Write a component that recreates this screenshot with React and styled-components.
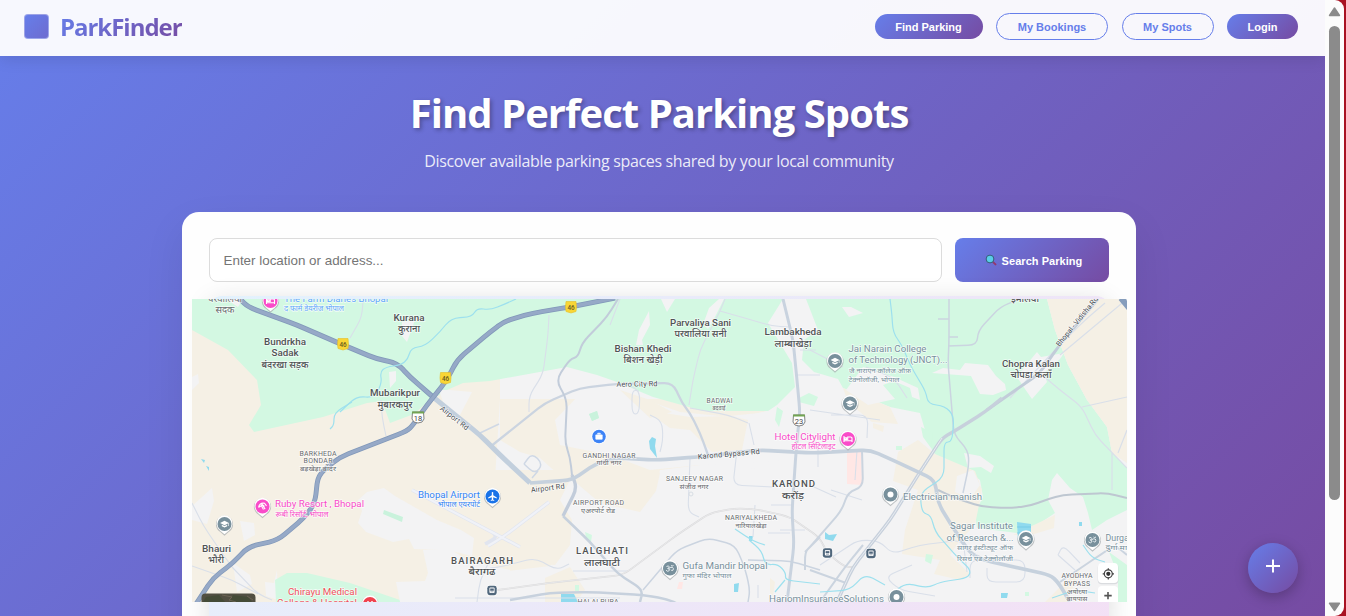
import React from "react";
import styled, { createGlobalStyle, css } from "styled-components";

const gradient = "linear-gradient(135deg, #667eea 0%, #764ba2 100%)";

const GlobalStyle = createGlobalStyle`
  * { box-sizing: border-box; }
  body { margin: 0; overflow: hidden; background: #a81222; }
`;

const Window = styled.div`
  display: flex;
  width: 1344px;
  height: 616px;
  overflow: hidden;
  border-radius: 0 9px 9px 0;
  background: #fcfcfc;
`;

const Page = styled.div`
  display: flex;
  flex-direction: column;
  width: 1325px;
  height: 616px;
  overflow: hidden;
  position: relative;
  background: ${gradient};
  font-family: "Open Sans", "Noto Sans", sans-serif;
`;

const Header = styled.header`
  display: flex;
  flex: none;
  align-items: center;
  justify-content: space-between;
  height: 56px;
  padding: 0 27px 3px 24px;
  background: rgba(255, 255, 255, 0.95);
  box-shadow: 0 2px 16px rgba(0, 0, 0, 0.12);
`;

const Brand = styled.div`
  display: flex;
  align-items: center;
  gap: 11px;
`;

const BrandMark = styled.span`
  width: 25px;
  height: 25px;
  border-radius: 4px;
  border: 1px solid rgba(190, 196, 240, 0.6);
  background: linear-gradient(135deg, #667eea, #6d6cd0);
`;

const BrandName = styled.span`
  font-size: 24px;
  line-height: 34px;
  font-weight: 700;
  letter-spacing: -1.03px;
  color: transparent;
  background: ${gradient};
  background-clip: text;
`;

const Nav = styled.nav`
  display: flex;
  align-items: center;
  gap: 13.5px;
`;

const NavButton = styled.button`
  width: ${(p) => p.$width}px;
  height: 25px;
  padding: 0;
  border: 0;
  border-radius: 14px;
  color: #fff;
  background: ${gradient};
  font: 700 11px "Liberation Sans", Arial, sans-serif;
  ${(p) =>
    p.$outline &&
    css`
      height: 27px;
      border: 1.4px solid #667eea;
      color: #667eea;
      background: transparent;
    `}
`;

const Hero = styled.section`
  display: flex;
  flex-direction: column;
  align-items: center;
  flex: none;
  height: 156px;
  padding: 29px 7px 0 0;
  color: #fff;
`;

const Title = styled.h1`
  margin: 0;
  font-size: 40px;
  line-height: 56px;
  font-weight: 700;
  letter-spacing: -0.96px;
  white-space: nowrap;
  text-shadow: 2px 2px 4px rgba(0, 0, 0, 0.3);
`;

const Subtitle = styled.p`
  margin: 9px 0 0;
  font-size: 16px;
  line-height: 22px;
  letter-spacing: -0.345px;
  white-space: nowrap;
  color: rgba(255, 255, 255, 0.88);
`;

const Card = styled.main`
  display: flex;
  flex-direction: column;
  flex: none;
  width: 954px;
  height: 460px;
  margin-left: 182px;
  padding: 26px 27px 0;
  border-radius: 17px;
  background: #fefefe;
  box-shadow: 0 16px 40px rgba(0, 0, 0, 0.08);
`;

const SearchRow = styled.div`
  display: flex;
  gap: 13px;
  height: 44px;
`;

const SearchInput = styled.input`
  flex: 1;
  min-width: 0;
  padding: 0 13.5px;
  border: 1px solid #dcdcdc;
  border-radius: 8px;
  outline: 0;
  background: #fff;
  font: 13.4px "Liberation Sans", Arial, sans-serif;
  &::placeholder { color: #757575; }
`;

const SearchButton = styled.button`
  display: flex;
  align-items: center;
  justify-content: center;
  gap: 5px;
  width: 154px;
  padding: 2px 0 0 3px;
  border: 0;
  border-radius: 8px;
  color: #fff;
  background: ${gradient};
  font: 700 11px "Liberation Sans", Arial, sans-serif;
  letter-spacing: 0.05px;
  svg { margin-top: -2px; }
`;

const MapPanel = styled.div`
  display: flex;
  justify-content: center;
  align-items: flex-start;
  height: 340px;
  margin-top: 14px;
  padding-top: 3px;
  border-radius: 12px;
  background: linear-gradient(135deg, #e3f2fd 0%, #f3e0f5 100%);
  box-shadow: 0 5px 26px rgba(0, 0, 0, 0.13);
`;

const MapView = styled.svg`
  display: block;
  flex: none;
  width: 935px;
  height: 303px;
  margin-left: 1px;
`;

const AddButton = styled.button`
  display: grid;
  place-items: center;
  position: absolute;
  right: 27px;
  bottom: 23px;
  width: 50px;
  height: 50px;
  padding: 0 0 4px;
  border: 0;
  border-radius: 50%;
  background: ${gradient};
  box-shadow: 0 4px 14px rgba(0, 0, 0, 0.25);
`;

const Scrollbar = styled.div`
  display: flex;
  flex-direction: column;
  align-items: center;
  justify-content: space-between;
  width: 19px;
  padding: 7px 0 4px;
`;

const Thumb = styled.div`
  width: 11px;
  height: 474px;
  margin: 0 0 94px;
  border-radius: 6px;
  background: #8b8b8b;
`;

const GREEN = "#d3f8e2";
const SAND = "#f5f0e5";
const URBAN = "#f3f3f4";
const WATER = "#90daee";
const GREY = "#78909c";
const PINK = "#f94cc9";

const areas = [
  [SAND, "M192 299H500V440L520 452 540 458 560 476 590 472 610 470 640 500 655 490 660 470 700 465 690 420 770 412 765 399H500L490 560 560 540 570 560 550 602H192Z"],
  [URBAN, "M480 602 500 572 550 566 575 525 570 500 610 512 640 510 660 490 690 475 790 465V602Z"],
  [SAND, "M545 578 570 567 585 590 576 602H545Z"],
  [SAND, "M490 470 575 470 560 500 572 520 570 545 555 565 490 560Z"],
  [URBAN, "M555 420 580 394 615 388 640 398 680 412 740 418 770 410 790 418 790 460 700 465 650 470 610 455 560 445Z"],
  [SAND, "M645 410 690 417 732 416 748 420 742 450 712 452 690 430 670 428ZM620 390 650 400 672 412 650 418Z"],
  [SAND, "M567 474 597 460 630 466 660 473 656 491 640 512 600 503 580 486Z"],
  [GREEN, "M192 299H783L768 323 792 363 795 387 777 405 768 411 703 411 653 397 617 382 597 375 567 367 490 381 463 383 447 390 424 405 414 414 390 423 382 401 367 403 323 417 254 432 249 425 261 405 257 380 228 350 192 330Z"],
  [GREEN, "M806 299H1047L1055 330 1068 365 1087 400 1093 408 1107 427 1112 453 1127 468V510L1107 520 1092 530 1088 513 1083 497 1070 488 1057 473 1052 480 1048 500 1055 513 1040 523 1017 533 977 528 975 513 983 497 980 480 963 467 937 457 932 450 927 437 920 413 890 407 864 396 843 388 838 379 814 372 802 360 804 340 818 330Z"],
  [SAND, "M1047 299H1127V463L1112 453 1107 427 1093 408 1087 400 1068 365 1055 330Z"],
  [SAND, "M843 388 890 407 898 424 872 422 848 402ZM898 452 918 440 935 454 975 471 982 490 975 525 960 540 950 555 970 574 960 580 934 574 940 560 902 554 905 530 918 490 893 481Z"],
  [SAND, "M1013 535 1055 515 1054 528 1031 535ZM1120 535 1080 570 1067 602H1045L1065 582ZM873 423 884 426 883 432 873 428ZM770 578 775 582 773 596 770 593Z"],
  [URBAN, "M192 506 212 488 214 501 207 524 192 520ZM240 521 254 523 255 535 244 541ZM233 563 250 575 252 584 237 592ZM278 600 266 596 265 582 274 583 277 570Z"],
  [GREEN, "M275 580 287 573 307 573 350 583 400 600 400 602H276Z"],
  [URBAN, "M358 500 367 492 384 488 395 496 437 520 461 530 474 538 472 556 448 550 414 549 409 539 393 542 366 532 358 523 362 511ZM396 582 425 581 428 573 423 550 450 549 467 560 510 570V602H400Z"],
  [URBAN, "M439 390 450 390 472 392 460 415 447 414ZM192 377 198 374 199 383 192 390ZM389 372 396 371 396 381 390 388ZM402 322 415 320 407 342 402 336ZM226 299 243 299 238 307Z"],
  [URBAN, "M639 330 649 311 650 325 642 340 643 345 636 345ZM661 299H675L667 312ZM709 308 719 299H724L716 315 708 329 703 324 705 319ZM842 307 851 307 863 313 849 317Z"],
  [URBAN, "M863 367 885 374 894 377 918 388 920 400 912 397 910 388 894 381 883 385 895 399 868 405 846 390ZM932 373 943 368 960 370 965 363 988 365 996 376 1005 384 1006 390 993 395 980 394 971 376Z"],
  [URBAN, "M1022 370 1037 352 1041 357 1064 353 1060 359 1044 373 1047 382 1032 399 1025 389 1017 377ZM964 453 980 456 994 466 991 473 981 467 968 468ZM957 476 973 470 980 485 970 499 955 492Z"],
  [GREEN, "M777 407 783 411 779 427 775 420ZM799 398 809 393 818 397 814 406 799 402ZM589 414 597 411 599 418 592 421ZM921 427 933 433 931 448 923 437Z"],
  [GREEN, "M585 532 592 535 591 542 586 537ZM896 446 902 446 902 450 896 450ZM926 554 933 555 931 564 925 561ZM1109 552 1127 565V602H1118V575ZM1025 592 1029 592 1029 596 1025 596ZM575 585 579 585 579 591 575 591Z"],
  ["#c9f2dc", "M384 510 403 517 402 522 383 514ZM589 414 597 411 599 418 592 421Z"],
  ["#ffe7e5", "M847 453 861 451 862 485 847 484ZM679 582 683 582 682 589 677 589Z"],
  [WATER, "M561 594H574L578 602H561ZM1017 522 1031 524 1031 541H1018ZM825 532 829 535 837 534 833 541 825 539ZM649 441 652 437 656 439 655 446 657 458 650 449ZM1001 593 1008 593 1007 598 1001 598ZM749 536 753 536 752 541 749 541ZM734 584 739 583 738 592 734 592ZM1079 522 1082 522 1082 526 1079 526ZM201 459 205 460 204 463ZM206 466 209 467 209 471Z"],
];

const roads = [
  // Side streets
  ["#d9dfe9", 1.1, "M363 299 362 317 350 338M381 400 382 417 386 436M192 503 203 525 215 543 232 567M192 566 232 580 258 594M232 567 258 594 272 600M549 315 548 335 543 374 529 396V412M620 299 610 325M631 386 640 392 639 414 632 414 632 390 639 391M650 415 662 421 663 440 660 452M690 408 728 415 748 423M749 423 754 445M720 311 700 350 693 380 689 405M725 299 720 311"],
  ["#d9dfe9", 1.1, "M690 459 689 485 688 512 699 517M737 450 733 485 773 487M771 505H792M768 533H790M795 375H820M800 350H816M831 415H868L867 438M831 490 862 500M857 450 855 480M814 487 836 497M820 565 858 540 880 541 892 554 920 545 963 540 967 572M1000 560H970V578M990 560H1025V582H987V568M912 565 885 577 900 590 935 596M1058 555 1075 570M1058 555 1063 545 1080 563M490 568 500 567 535 558 557 570 569 564M573 571H628M477 602 480 580 490 560M455 598 620 598M780 530H805M810 410 880 420M818 445V467M755 505 753 537M758 598V585"],
  ["#d9dfe9", 1.2, "M720 311 755 321 772 326 789 327M866 367 894 378 907 398M810 350 843 367M1105 303 1085 320 1058 347 1040 366 1010 398M1127 299 1060 355M1040 373 1060 390 1082 407 1095 435 1127 468M1082 407 1127 397M1118 453 1127 430M1112 453V490"],
  ["#e1e5ef", 3.5, "M412 490 499 536 485 544M488 546 503 537 549 502M490 531 520 547"],
  ["#f0f2f8", 2.2, "M412 490 499 536M488 546 503 537 549 502M490 531 520 547"],
  ["#cfd8e5", 1.5, "M524 464 532 453 543 464 535 474 524 464M532 478 538 471M480 433 499 424"],
  // Railway
  ["#d9d9db", 1.8, "M490 591 557 582 623 575 677 535 710 513 737 508 760 510 790 517 820 538 827 553 845 567 853 567"],
  ["#f3f3f4", 0.6, "M490 591 557 582 623 575 677 535 710 513 737 508 760 510 790 517 820 538 827 553 845 567 853 567"],
  // Secondary roads
  ["#cbd4e0", 1.5, "M949 299V343L948 363 954 435 968 450 969 465 963 493M948 346 977 345 978 331 1000 307 1020 299M938 319H949M949 337H958M643 590 677 550 708 538 735 545 745 568 750 590 748 602M748 560 790 561 820 570"],
  ["#cbd4e0", 2.3, "M490 447 545 403 580 388 617 384 673 383 682 403 690 413 700 433 708 455"],
  ["#c2ccda", 2, "M618 299 607 317 582 343 578 357 570 359 556 380 567 400 565 443 570 457 572 475"],
  ["#c2ccda", 3.4, "M572 475 577 488 563 516"],
  ["#c7d1dd", 2.5, "M563 516 590 542 617 573 643 590 640 602M510 600 550 593 590 592 643 595 667 599 680 605"],
  ["#c9d3df", 3, "M783 299 793 340 797 380 800 413 798 430 796 452 792 512 794 545 787 602"],
  ["#cbd4df", 2, "M862 450 863 487 848 492 842 510 810 547 805 552V570M810 570 846 583M820 537 805 552M1060 582 1100 555 1115 545 1127 555M820 602 845 567 863 545"],
  ["#bec7d1", 2, "M938 490 955 498 983 507 1010 508 1030 506 1048 499 1063 495 1107 493 1127 498"],
  ["#c2ccd9", 3, "M1098 299 1058 347 1040 373 987 410"],
  ["#c7d0dc", 3.4, "M1002 398 985 412 953 432 942 438 920 472 890 520 853 567 837 602"],
  ["#ffffff", 0.6, "M942 438 920 472 890 520 853 567 837 602"],
  ["#c6d1dd", 3.7, "M530 483 572 480 597 463 617 458 657 460 697 457 760 450 810 453 870 450 897 462 935 480 938 503 950 523 970 553 983 560 1050 575 1058 582 1070 602"],
  ["#c2cfdd", 5, "M433 397 480 435 500 455 530 483"],
  // Highways
  ["#8198b9", 5.1, "M240 299 248 307 297 325 343 345 377 359 397 363 410 377 433 397"],
  ["#96a9c7", 3.6, "M240 299 248 307 297 325 343 345 377 359 397 363 410 377 433 397"],
  ["#8198b9", 4.9, "M615 298 570 307 533 313 505 321 490 332 457 360 447 380 427 405 413 425 407 431 340 457 318 475 315 503 305 517 278 540 248 547 233 563 213 578 196 604"],
  ["#96a9c7", 3.4, "M615 298 570 307 533 313 505 321 490 332 457 360 447 380 427 405 413 425 407 431 340 457 318 475 315 503 305 517 278 540 248 547 233 563 213 578 196 604"],
  ["#869dbc", 6, "M1121 298 1130 309"],
  // Streams
  ["#9de0ee", 1.2, "M340 412 357 396 374 398 382 383 380 372 386 367 401 365 408 359 411 348 425 346 440 332 451 318 472 317 477 308 490 310 505 304 516 299"],
  ["#9de0ee", 1.2, "M352 402 334 413 334 425 330 429M890 299 892 315 893 333 902 345 910 365 926 392 928 404 945 406 954 416 952 442 944 442 944 477 920 493 922 513 931 515 935 532 960 560 971 570 968 578 940 582 928 588 905 583 890 596M735 529 753 541 765 545M749 540 762 551 765 565 778 564 786 573 785 580 820 584M785 580 775 592M820 592 850 590 865 574 885 585M1083 545 1092 558 1105 562M1052 598 1075 590 1095 593"],
];

// Turns the straight runs of a road into a line whose bends are rounded.
function roundBends(d, radius = 9) {
  const lines = [];
  let mode = "M";
  let pts = [];
  const tokens = d.match(/[MLHV]|-?[\d.]+/g);
  for (let i = 0; i < tokens.length; i++) {
    const t = tokens[i];
    if (/[MLHV]/.test(t)) {
      mode = t;
      if (t === "M") {
        pts = [];
        lines.push(pts);
      }
      continue;
    }
    const last = pts[pts.length - 1];
    if (mode === "H") pts.push([+t, last[1]]);
    else if (mode === "V") pts.push([last[0], +t]);
    else pts.push([+t, +tokens[++i]]);
  }
  const toward = (a, b) => {
    const len = Math.hypot(b[0] - a[0], b[1] - a[1]) || 1;
    const k = Math.min(radius, len / 2) / len;
    return [a[0] + (b[0] - a[0]) * k, a[1] + (b[1] - a[1]) * k];
  };
  return lines
    .map((p) =>
      p.map((q, i) => {
        if (i === 0) return `M${q}`;
        if (i === p.length - 1) return `L${q}`;
        return `L${toward(q, p[i - 1])}Q${q} ${toward(q, p[i + 1])}`;
      }).join("")
    )
    .join("");
}

const places = [
  { x: 225, y: 302, w: 34, t: "परवालिया", s: 10 },
  { x: 225, y: 313, w: 19, t: "सदक", s: 10 },
  { x: 409, y: 321, w: 31, t: "Kurana" },
  { x: 409, y: 332, w: 22, t: "कुराना" },
  { x: 285, y: 344.5, w: 42, t: "Bundrkha" },
  { x: 285, y: 356, w: 27, t: "Sadak" },
  { x: 285, y: 367.5, w: 47, t: "बंदरखा सड़क" },
  { x: 395, y: 396, w: 50, t: "Mubarikpur" },
  { x: 395, y: 408, w: 35, t: "मुबारकपुर" },
  { x: 700.5, y: 326, w: 61, t: "Parvaliya Sani" },
  { x: 700.5, y: 337, w: 52, t: "परवालिया सनी" },
  { x: 643, y: 351.5, w: 57, t: "Bishan Khedi" },
  { x: 643, y: 363, w: 39, t: "बिशन खेड़ी" },
  { x: 793, y: 335, w: 57, t: "Lambakheda" },
  { x: 793, y: 346.5, w: 37, t: "लाम्बाखेड़ा" },
  { x: 1031, y: 367, w: 58, t: "Chopra Kalan" },
  { x: 1031, y: 378, w: 41, t: "चोपडा कलाँ" },
  { x: 1025, y: 301.5, w: 28, t: "इमलिया" },
  { x: 216.5, y: 552, w: 29, t: "Bhauri" },
  { x: 216, y: 563, w: 16, t: "भौरी" },
  { x: 318, y: 456, w: 37, t: "BARKHEDA", s: 7 },
  { x: 318, y: 463, w: 29, t: "BONDAR", s: 7 },
  { x: 318, y: 471, w: 36, t: "बड़खेड़ा बोंदर", s: 7 },
  { x: 482, y: 563.5, w: 62, t: "BAIRAGARH" },
  { x: 482, y: 575, w: 27, t: "बैरागढ" },
  { x: 602, y: 554, w: 52, t: "LALGHATI" },
  { x: 602, y: 565.5, w: 36, t: "लालघाटी" },
  { x: 793.5, y: 487, w: 43, t: "KAROND" },
  { x: 793, y: 498.5, w: 22, t: "करोंड़" },
  { x: 719.5, y: 403, w: 26, t: "BADWAI", s: 6.7 },
  { x: 719, y: 410, w: 13, t: "बदवाई", s: 6 },
  { x: 609, y: 457.5, w: 53, t: "GANDHI NAGAR", s: 6.9 },
  { x: 609, y: 465, w: 25, t: "गांधी नगर", s: 6.5 },
  { x: 694.5, y: 481, w: 57, t: "SANJEEV NAGAR", s: 6.9 },
  { x: 694, y: 488.5, w: 29, t: "संजीव नगर", s: 6.5 },
  { x: 598.5, y: 505, w: 51, t: "AIRPORT ROAD", s: 6.9 },
  { x: 598, y: 513, w: 34, t: "एअरपोर्ट रोड", s: 6.5 },
  { x: 751, y: 520, w: 52, t: "NARIYALKHEDA", s: 6.9 },
  { x: 751, y: 527.5, w: 31, t: "नारियालखेड़ा", s: 6.5 },
  { x: 598, y: 604, w: 41, t: "HALALPURA", s: 7 },
  { x: 1077, y: 578, w: 31, t: "AYODHYA", s: 6.9 },
  { x: 1077, y: 586, w: 26, t: "BYPASS", s: 6.9 },
  { x: 1077, y: 593.5, w: 20, t: "अयोध्या", s: 6.5 },
  { x: 1077, y: 600.5, w: 21, t: "बायपास", s: 6.5 },
  { x: 336, y: 301.5, w: 104, t: "The Farm Diaries Bhopal", c: "#62a7fb" },
  { x: 314, y: 310.5, w: 60, t: "द फार्म डेयरीज भोपाल", c: "#62a7fb", s: 7.5 },
  { x: 319.5, y: 507, w: 89, t: "Ruby Resort , Bhopal", c: PINK },
  { x: 302, y: 517, w: 53, t: "रूबी रिसॉर्ट, भोपाल", c: PINK, s: 7.5 },
  { x: 449, y: 497.5, w: 62, t: "Bhopal Airport", c: "#3484f5" },
  { x: 459, y: 507, w: 42, t: "भोपाल एयरपोर्ट", c: "#3484f5", s: 7.5 },
  { x: 805, y: 439.5, w: 61, t: "Hotel Citylight", c: PINK },
  { x: 813.5, y: 449, w: 44, t: "होटल सिटिलाइट", c: PINK, s: 7.5 },
  { x: 322.5, y: 594.5, w: 69, t: "Chirayu Medical", c: "#f0515c" },
  { x: 317, y: 606, w: 80, t: "College & Hospital", c: "#f0515c" },
  { x: 887.5, y: 351.5, w: 78, t: "Jai Narain College", c: GREY },
  { x: 898, y: 363, w: 99, t: "of Technology (JNCT)...", c: GREY },
  { x: 880, y: 373, w: 62, t: "जै नाराएन कॉलेज ऑफ़", c: GREY, s: 7 },
  { x: 874, y: 382, w: 51, t: "टेक्नोलॉजी, भोपाल", c: GREY, s: 7 },
  { x: 942.5, y: 499.5, w: 79, t: "Electrician manish", c: GREY },
  { x: 981.5, y: 529, w: 63, t: "Sagar Institute", c: GREY },
  { x: 980, y: 541, w: 67, t: "of Research &...", c: GREY },
  { x: 985, y: 550, w: 56, t: "सागर इंस्टीट्यूट ऑफ", c: GREY, s: 7 },
  { x: 985, y: 560.5, w: 56, t: "रिसर्च एंड टेक्नोलॉजी", c: GREY, s: 7 },
  { x: 725, y: 569, w: 85, t: "Gufa Mandir bhopal", c: GREY },
  { x: 707, y: 578, w: 49, t: "गुफा मंदिर भोपाल", c: GREY, s: 7 },
  { x: 826.5, y: 601.5, w: 115, t: "HariomInsuranceSolutions", c: GREY },
  { x: 1132, y: 541, w: 53, t: "Durga Mandir", c: GREY },
  { x: 1120, y: 550, w: 29, t: "दुर्गा माता", c: GREY, s: 7 },
];

const streetNames = [
  { x: 637, y: 386.5, w: 41, r: -1, t: "Aero City Rd" },
  { x: 453, y: 420, w: 34, r: 38, t: "Airport Rd" },
  { x: 548, y: 490.5, w: 34, r: -7, t: "Airport Rd" },
  { x: 729, y: 456.5, w: 62, r: -5, t: "Karond Bypass Rd" },
  { x: 1079, y: 323, w: 62, r: -51, t: "Bhopal - Vidisha Rd" },
];

const pins = [
  [270.5, 301, PINK, "bed"], [262.5, 506.5, PINK, "fan"], [848, 439, PINK, "bed"],
  [835, 361, GREY, "cap"], [850, 403.5, GREY, "cap"], [224.5, 524, GREY, "cap"], [1026, 539, GREY, "cap"],
  [890.5, 494.5, GREY, "dot"], [896.5, 597, GREY, "dot"], [670, 568.5, GREY, "om"], [1092.5, 540, GREY, "om"],
  [492.5, 496.5, "#1a73e8", "plane"], [370, 604, "#f0414e", "h"],
];

function PinGlyph({ kind }) {
  if (kind === "bed")
    return <path d="M-4-3V3M-4 1.8H4V3M4 1.5V-.8Q4-2 2.7-2H-.3V1M-3-1.2H-1.5V.5H-3Z" stroke="#fff" strokeWidth="1.1" fill="none" />;
  if (kind === "fan")
    return <path d="M-4 1Q-3-4 2-3.3L4-.6M-3.3.4 0-1.5 2.6 2.6M-1-2.5 2 0M-1-.6 1 3" stroke="#fff" strokeWidth="1.1" fill="none" />;
  if (kind === "cap")
    return <g fill="#fff"><path d="M-4.4-1 0-3.3 4.4-1 0 1.2Z" /><path d="M-2.7.7 0 2.1 2.7.7V2.2L0 3.6-2.7 2.2ZM3.8-1H4.4V2H3.8Z" /></g>;
  if (kind === "om")
    return <path d="M-3.5-2Q-1-3.4-.8-1.6-.8-.2-2.4 0 0 0-.7 2-2 3.8-4 1.8M-1.2 0Q1-1.8 2.7-1 4 0 3 1.7 1.5 2.5.8 1.2M1-3Q2-1.9 3.5-3" stroke="#e6edf0" strokeWidth="1" fill="none" />;
  if (kind === "plane")
    return <path d="M-.7-4.2Q0-5 .7-4.2V-1.3L4.3 1V2L.7.8V3L1.8 3.9V4.5L0 4-1.8 4.5V3.9L-.7 3V.8L-4.3 2V1L-.7-1.3Z" fill="#fff" />;
  if (kind === "h")
    return <path d="M-2-3V3M2-3V3M-2 0H2" stroke="#fff" strokeWidth="1.4" />;
  return <circle r="3" fill="#fff" />;
}

function Pin({ x, y, color, kind }) {
  return (
    <g transform={`translate(${x} ${y})`}>
      <path d="M-8.5 1A8.6 8.6 0 1 1 8.5 1Q8 5 4.2 7.6L0 11.3-4.2 7.6Q-8 5-8.5 1Z" fill="#a4a9ad" opacity=".7" transform="translate(0 .4)" />
      <path d="M-7.9.5A8 8 0 1 1 7.9.5Q7.3 4.7 4 7L0 10.3-4 7Q-7.3 4.7-7.9.5Z" fill="#fff" />
      <circle r="7" fill={color} />
      <PinGlyph kind={kind} />
    </g>
  );
}

function HighwayShield({ x, y }) {
  return (
    <g>
      <path d={`M${x - 5} ${y - 5.5}H${x + 5}Q${x + 6} ${y} ${x + 5} ${y + 4.5}L${x} ${y + 6}L${x - 5} ${y + 4.5}Q${x - 6} ${y} ${x - 5} ${y - 5.5}Z`} fill="#f9d635" stroke="#e4bd28" strokeWidth=".6" />
      <text x={x} y={y + 3} fontSize="6.3" fontWeight="500" textAnchor="middle" fill="#665820">46</text>
    </g>
  );
}

function StateShield({ x, y, value }) {
  return (
    <g>
      <path d={`M${x - 5.5} ${y - 5}H${x + 5.5}L${x + 6} ${y + 2}Q${x + 5} ${y + 6} ${x} ${y + 6}T${x - 6} ${y + 2}Z`} fill="#fff" stroke="#757575" strokeWidth=".9" />
      <path d={`M${x - 6} ${y - 5.5}H${x + 6}V${y - 3.5}H${x - 6}Z`} fill="#72a552" />
      <text x={x} y={y + 4} fontSize="7.5" textAnchor="middle" fill="#444">{value}</text>
    </g>
  );
}

function Station({ x, y }) {
  return (
    <g transform={`translate(${x} ${y})`}>
      <rect x="-5.4" y="-5.4" width="10.8" height="10.8" rx="3" fill="#fff" opacity=".8" />
      <rect x="-4.7" y="-4.7" width="9.4" height="9.4" rx="2.4" fill="#50677c" />
      <rect x="-2.6" y="-3" width="5.2" height="5.5" rx="1" fill="#fff" />
      <path d="M-1.6-1.7H1.6V0H-1.6ZM-1.5 1.3H1.5" fill="#50677c" stroke="#50677c" strokeWidth=".5" />
    </g>
  );
}

const mapFont = 'Roboto, "Noto Sans", sans-serif';

function CityMap() {
  return (
    <MapView viewBox="192 299 935 303" fontFamily={mapFont} role="img" aria-label="Bhopal">
      <rect x="192" y="299" width="935" height="303" fill={URBAN} />
      {areas.map(([fill, d], i) => <path key={i} d={d} fill={fill} />)}
      {roads.map(([stroke, width, d], i) => (
        <path key={i} d={roundBends(d)} fill="none" stroke={stroke} strokeWidth={width} strokeLinejoin="round" />
      ))}
      <path d="M1017 527H1031M1017 533H1031" stroke="#6fc5e4" strokeWidth=".7" />
      <circle cx="691" cy="494" r="2" fill="#f3f3f4" stroke="#d2d8df" strokeWidth=".8" />
      {streetNames.map((s, i) => (
        <text key={i} x={s.x} y={s.y} transform={`rotate(${s.r} ${s.x} ${s.y})`} textAnchor="middle" textLength={s.w} fontSize="7.4" fill="#4c5155" stroke="#fff" strokeOpacity=".65" strokeWidth="1.5" paintOrder="stroke">{s.t}</text>
      ))}
      {places.map((p, i) => (
        <text key={i} x={p.x} y={p.y} textAnchor="middle" textLength={p.w} lengthAdjust={/[A-Z]{4}/.test(p.t) ? "spacing" : "spacingAndGlyphs"} fontSize={p.s || 9.6} fontWeight={p.c || p.s ? 400 : 500} fill={p.c || (p.s ? "#686b6e" : "#505355")} stroke="#fff" strokeOpacity=".7" strokeWidth="1.4" paintOrder="stroke">{p.t}</text>
      ))}
      <HighwayShield x={343} y={344} />
      <HighwayShield x={445.5} y={378} />
      <HighwayShield x={571} y={307} />
      <StateShield x={418} y={417} value="18" />
      <StateShield x={799} y={420} value="23" />
      <Station x={492} y={590.5} />
      <Station x={827.5} y={553} />
      <Station x={871} y={553.5} />
      <circle cx="599" cy="436.5" r="7.6" fill="#fff" />
      <circle cx="599" cy="436.5" r="6.8" fill="#3d83f6" />
      <path d="M595.8 434.9H602.2V439.2H595.8ZM597.7 434.4V433.2H600.3V434.4" fill="#fff" stroke="#fff" strokeWidth=".7" />
      {pins.map(([x, y, color, kind], i) => <Pin key={i} x={x} y={y} color={color} kind={kind} />)}
      <rect x="201.5" y="593.5" width="54" height="16" rx="4" fill="#514f42" />
      <path d="M206 597 219 595 225 602H203ZM233 595 248 597 252 602H230Z" fill="#444b37" />
      <path d="M222 595 232 597 229 600 236 602M247 596 253 600" stroke="#6b6353" fill="none" />
      <g>
        <rect x="1097.8" y="563.8" width="20.6" height="20.4" rx="4" fill="#cfd2d5" opacity=".7" />
        <rect x="1098" y="563" width="20" height="20" rx="4" fill="#fff" />
        <circle cx="1108.3" cy="573.8" r="4" fill="none" stroke="#444" strokeWidth="1.2" />
        <circle cx="1108.3" cy="573.8" r="2.1" fill="#333" />
        <path d="M1108.3 568.2V570M1108.3 577.5V579.4M1102.7 573.8H1104.5M1112 573.8H1114" stroke="#444" strokeWidth="1.2" />
        <rect x="1098" y="586" width="20" height="24" rx="4" fill="#fff" />
        <path d="M1108 592V599.3M1104.3 595.6H1111.7" stroke="#555" strokeWidth="1.6" />
      </g>
    </MapView>
  );
}

export default function App() {
  return (
    <>
      <GlobalStyle />
      <Window>
        <Page>
          <Header>
            <Brand>
              <BrandMark />
              <BrandName>ParkFinder</BrandName>
            </Brand>
            <Nav>
              <NavButton $width={108}>Find Parking</NavButton>
              <NavButton $width={112} $outline>My Bookings</NavButton>
              <NavButton $width={92} $outline>My Spots</NavButton>
              <NavButton $width={71}>Login</NavButton>
            </Nav>
          </Header>
          <Hero>
            <Title>Find Perfect Parking Spots</Title>
            <Subtitle>Discover available parking spaces shared by your local community</Subtitle>
          </Hero>
          <Card>
            <SearchRow>
              <SearchInput placeholder="Enter location or address..." />
              <SearchButton>
                <svg width="12" height="12" viewBox="0 0 12 12">
                  <path d="M7.6 7.6 10.5 10.4" stroke="#92386f" strokeWidth="2" strokeLinecap="round" />
                  <circle cx="5" cy="5" r="3.9" fill="#59cde9" stroke="#365b78" strokeWidth="1" />
                </svg>
                <span>Search Parking</span>
              </SearchButton>
            </SearchRow>
            <MapPanel>
              <CityMap />
            </MapPanel>
          </Card>
          <AddButton aria-label="Add">
            <svg width="14" height="14" viewBox="0 0 14 14">
              <path d="M7 .5V13.5M0 7H14" stroke="#fff" strokeWidth="2" />
            </svg>
          </AddButton>
        </Page>
        <Scrollbar>
          <svg width="13" height="10" viewBox="0 0 13 10">
            <path d="M6.5 1 11.5 8.5H1.5Z" fill="#8b8b8b" stroke="#8b8b8b" strokeWidth="1.4" strokeLinejoin="round" />
          </svg>
          <Thumb />
          <svg width="13" height="10" viewBox="0 0 13 10">
            <path d="M6.5 8.5 11.5 1.3H1.5Z" fill="#8b8b8b" stroke="#8b8b8b" strokeWidth="1.4" strokeLinejoin="round" />
          </svg>
        </Scrollbar>
      </Window>
    </>
  );
}
